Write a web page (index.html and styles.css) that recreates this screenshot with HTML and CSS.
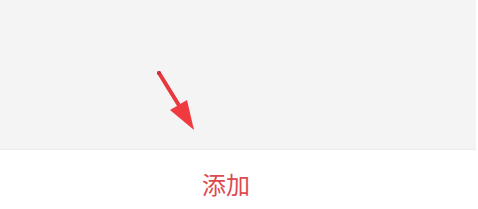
FILE: index.html
```html
<!DOCTYPE html>
<html lang="zh">
<head>
    <meta charset="UTF-8">
    <meta name="viewport" content="width=device-width, initial-scale=1.0">
    <title>添加</title>
    <link rel="stylesheet" href="styles.css">
</head>
<body>
    <div class="preview">
        <!-- hint arrow pointing at the image area -->
        <svg class="hint-arrow" width="50" height="70" viewBox="0 0 50 70">
            <line x1="9" y1="8" x2="30" y2="42" stroke="#e8383d" stroke-width="4" stroke-linecap="round"/>
            <circle cx="9" cy="8" r="2" fill="#c8323a"/>
            <polygon points="20,45 37,35 44,65" fill="#ef3a3f"/>
        </svg>
    </div>
    <div class="actions">
        <span class="add-btn">添加</span>
    </div>
</body>
</html>
```

FILE: styles.css
```css
* {
    margin: 0;
    padding: 0;
    box-sizing: border-box;
}

body {
    background: #fff;
    width: 478px;
    font-family: 'Noto Sans CJK SC', 'Noto Sans', sans-serif;
}

.preview {
    position: relative;
    width: 476px;
    height: 150px;
    background-color: #f4f4f4;
    border-bottom: 1px solid #ebebeb;
}

.hint-arrow {
    position: absolute;
    left: 150px;
    top: 65px;
}

.actions {
    height: 59px;
    display: flex;
    align-items: center;
    padding-top: 9px;
    padding-left: 202px;
}

.add-btn {
    color: #dc4a4e;
    font-size: 24px;
    line-height: 1;
}
```
